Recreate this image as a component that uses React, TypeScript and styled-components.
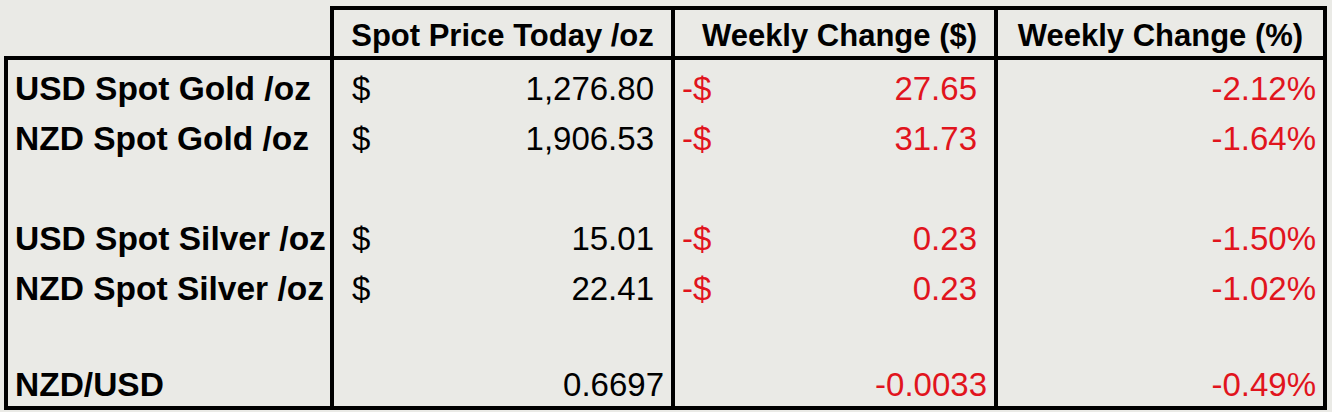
import React from "react";
import styled, { createGlobalStyle } from "styled-components";

const Global = createGlobalStyle`
  html, body {
    margin: 0;
    padding: 0;
    background: #eaeae6;
  }
  body {
    font-family: "Liberation Sans", Arial, sans-serif;
    color: #000;
  }
`;

const COLS = "322px 341px 323px 329px";
const RED = "#e1141d";

const Sheet = styled.div`
  display: flex;
  flex-direction: column;
  margin: 6px 0 0 4px;
  width: 1323px;
`;

const HeaderRow = styled.div`
  display: grid;
  grid-template-columns: 326px 341px 323px 333px;
  height: 50px;
`;

const HeaderCell = styled.div<{ $last?: boolean; $shift?: number }>`
  border-top: 4px solid #000;
  border-left: 4px solid #000;
  border-right: ${(p) => (p.$last ? "4px solid #000" : "none")};
  display: flex;
  align-items: flex-end;
  justify-content: center;
  padding-bottom: 5px;
  padding-left: ${(p) => p.$shift ?? 0}px;
  font-size: 31px;
  font-weight: 700;
  line-height: 1;
  white-space: nowrap;
`;

const Body = styled.div`
  border: 4px solid #000;
  display: grid;
  grid-template-columns: ${COLS};
  grid-template-rows: repeat(5, 50px) 47px 49px;
`;

const Cell = styled.div<{ $divider?: boolean }>`
  border-left: ${(p) => (p.$divider ? "4px solid #000" : "none")};
  display: flex;
  align-items: flex-end;
  padding-bottom: 5px;
  font-size: 33px;
  line-height: 1;
  white-space: nowrap;
`;

const Label = styled(Cell)`
  font-weight: 700;
  font-size: 33.5px;
  padding-left: 7px;
`;

const Money = styled(Cell)<{ $neg?: boolean }>`
  justify-content: space-between;
  color: ${(p) => (p.$neg ? RED : "#000")};
  padding-left: ${(p) => (p.$neg ? "7px" : "18px")};
  padding-right: 17px;
`;

const Plain = styled(Cell)<{ $neg?: boolean }>`
  justify-content: flex-end;
  color: ${(p) => (p.$neg ? RED : "#000")};
  padding-right: 7px;
`;

type Row =
  | { kind: "blank" }
  | { kind: "metal"; label: string; price: string; chg: string; pct: string }
  | { kind: "fx"; label: string; price: string; chg: string; pct: string };

const rows: Row[] = [
  { kind: "metal", label: "USD Spot Gold /oz", price: "1,276.80", chg: "27.65", pct: "-2.12%" },
  { kind: "metal", label: "NZD Spot Gold /oz", price: "1,906.53", chg: "31.73", pct: "-1.64%" },
  { kind: "blank" },
  { kind: "metal", label: "USD Spot Silver /oz", price: "15.01", chg: "0.23", pct: "-1.50%" },
  { kind: "metal", label: "NZD Spot Silver /oz", price: "22.41", chg: "0.23", pct: "-1.02%" },
  { kind: "blank" },
  { kind: "fx", label: "NZD/USD", price: "0.6697", chg: "-0.0033", pct: "-0.49%" },
];

export default function App() {
  return (
    <>
      <Global />
      <Sheet>
        <HeaderRow>
          <div />
          <HeaderCell>Spot Price Today /oz</HeaderCell>
          <HeaderCell $shift={10}>Weekly Change ($)</HeaderCell>
          <HeaderCell $last>Weekly Change (%)</HeaderCell>
        </HeaderRow>
        <Body>
          {rows.map((r, i) => {
            if (r.kind === "blank") {
              return (
                <React.Fragment key={i}>
                  <Label />
                  <Cell $divider />
                  <Cell $divider />
                  <Cell $divider />
                </React.Fragment>
              );
            }
            if (r.kind === "metal") {
              return (
                <React.Fragment key={i}>
                  <Label>{r.label}</Label>
                  <Money $divider>
                    <span>$</span>
                    <span>{r.price}</span>
                  </Money>
                  <Money $divider $neg>
                    <span>-$</span>
                    <span>{r.chg}</span>
                  </Money>
                  <Plain $divider $neg>{r.pct}</Plain>
                </React.Fragment>
              );
            }
            return (
              <React.Fragment key={i}>
                <Label>{r.label}</Label>
                <Plain $divider>{r.price}</Plain>
                <Plain $divider $neg>{r.chg}</Plain>
                <Plain $divider $neg>{r.pct}</Plain>
              </React.Fragment>
            );
          })}
        </Body>
      </Sheet>
    </>
  );
}
